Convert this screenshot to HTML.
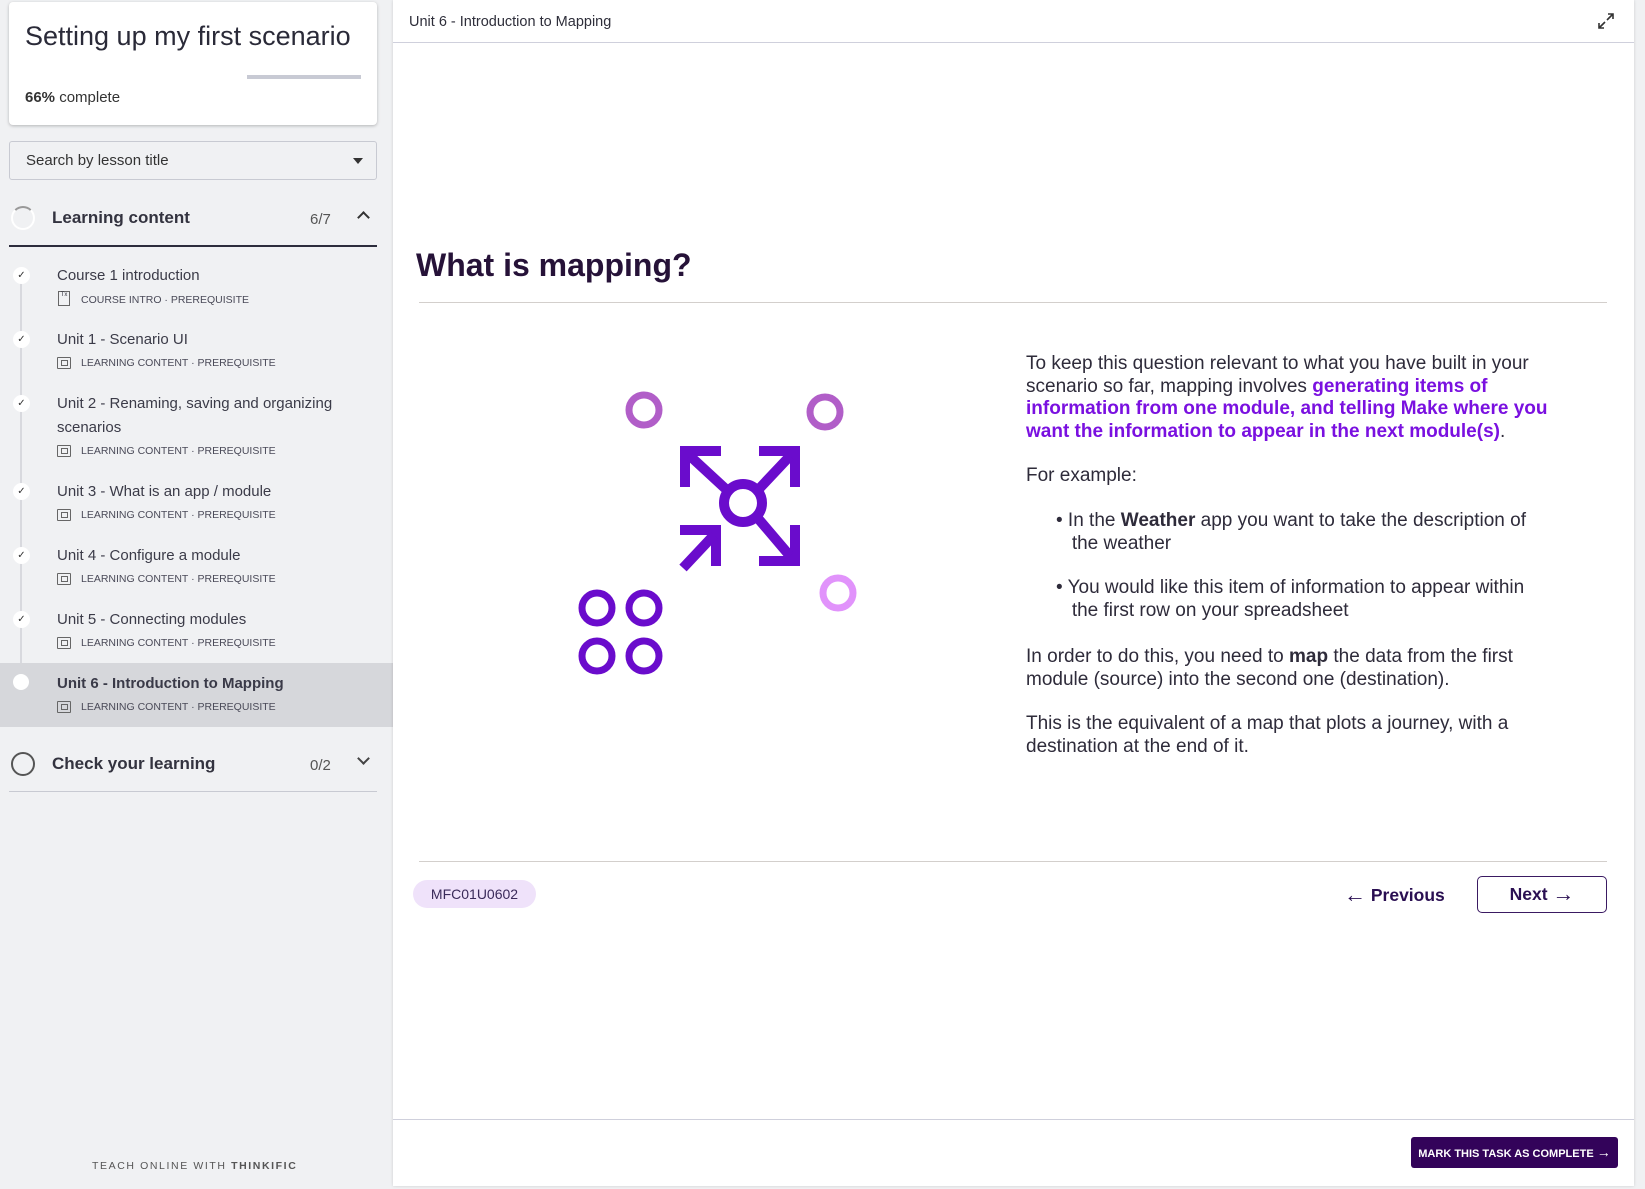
<!DOCTYPE html>
<html><head><meta charset="utf-8"><style>
*{margin:0;padding:0;box-sizing:border-box}
body{width:1645px;height:1189px;position:relative;overflow:hidden;background:#f0f1f3;font-family:"Liberation Sans",sans-serif;color:#2e2e3a}
.a{position:absolute;white-space:nowrap}
.t{font-size:15px;color:#3b3b48;margin-top:1px}
.m{font-size:10.5px;color:#4a4a58;margin-top:1px}
.ic{position:absolute;width:14px;height:12px;border:1.3px solid #666;border-radius:1px}
.ic:after{content:"";position:absolute;right:2px;bottom:2px;width:5px;height:4px;border:1px solid #666}
.ck{position:absolute;left:13px;width:17px;height:17px;border-radius:50%;background:#fff;font-size:10px;text-align:center;line-height:17px;color:#333}
.p{font-size:19px;color:#2e2b3a;line-height:22.7px;margin-top:2px}
.pu{color:#7a10e0;font-weight:bold}
.ar{font-size:22px;vertical-align:-1px}
</style></head><body>
<!-- sidebar -->
<div class="a" style="left:9px;top:2px;width:368px;height:123px;background:#fff;border-radius:4px;box-shadow:0 1px 3px rgba(0,0,0,.25)"></div>
<div class="a" style="left:25px;top:21px;font-size:27px;color:#2a2a38">Setting up my first scenario</div>
<div class="a" style="left:247px;top:75px;width:114px;height:4px;background:#c8cad4"></div>
<div class="a" style="left:25px;top:89px;font-size:15px;color:#333"><b style="font-weight:600">66%</b> complete</div>
<div class="a" style="left:9px;top:141px;width:368px;height:39px;border:1px solid #c8cad2;border-radius:3px;background:#f0f1f3"></div>
<div class="a" style="left:26px;top:152px;font-size:15px;color:#333">Search by lesson title</div>
<div class="a" style="left:353px;top:158px;border-left:5px solid transparent;border-right:5px solid transparent;border-top:6px solid #333"></div>
<div class="a" style="left:11px;top:206px;width:24px;height:24px;border-radius:50%;border:2px solid #fff;border-top-color:#999"></div>
<div class="a" style="left:52px;top:208px;font-size:17px;font-weight:bold;color:#33333f">Learning content</div>
<div class="a" style="left:310px;top:211px;font-size:15px;color:#555">6/7</div>
<div class="a" style="left:359px;top:213px;width:9px;height:9px;border-left:2px solid #333;border-top:2px solid #333;transform:rotate(45deg)"></div>
<div class="a" style="left:9px;top:245px;width:368px;height:2px;background:#2c2c3c"></div>
<div class="a" style="left:20px;top:280px;width:2px;height:400px;background:#d8d9de"></div>

<div class="ck" style="top:267px">✓</div>
<div class="a t" style="left:57px;top:266px">Course 1 introduction</div>
<div class="a" style="left:58px;top:291px;width:12px;height:15px;border:1.3px solid #666;font-size:6px;text-align:center">Tx</div>
<div class="a m" style="left:81px;top:293px">COURSE INTRO · PREREQUISITE</div>

<div class="ck" style="top:331px">✓</div>
<div class="a t" style="left:57px;top:330px">Unit 1 - Scenario UI</div>
<div class="ic" style="left:57px;top:357px"></div>
<div class="a m" style="left:81px;top:356px">LEARNING CONTENT · PREREQUISITE</div>

<div class="ck" style="top:395px">✓</div>
<div class="a t" style="left:57px;top:394px">Unit 2 - Renaming, saving and organizing</div>
<div class="a t" style="left:57px;top:418px">scenarios</div>
<div class="ic" style="left:57px;top:445px"></div>
<div class="a m" style="left:81px;top:444px">LEARNING CONTENT · PREREQUISITE</div>

<div class="ck" style="top:483px">✓</div>
<div class="a t" style="left:57px;top:482px">Unit 3 - What is an app / module</div>
<div class="ic" style="left:57px;top:509px"></div>
<div class="a m" style="left:81px;top:508px">LEARNING CONTENT · PREREQUISITE</div>

<div class="ck" style="top:547px">✓</div>
<div class="a t" style="left:57px;top:546px">Unit 4 - Configure a module</div>
<div class="ic" style="left:57px;top:573px"></div>
<div class="a m" style="left:81px;top:572px">LEARNING CONTENT · PREREQUISITE</div>

<div class="ck" style="top:611px">✓</div>
<div class="a t" style="left:57px;top:610px">Unit 5 - Connecting modules</div>
<div class="ic" style="left:57px;top:637px"></div>
<div class="a m" style="left:81px;top:636px">LEARNING CONTENT · PREREQUISITE</div>

<div class="a" style="left:0;top:663px;width:393px;height:64px;background:#d6d7db"></div>
<div class="ck" style="top:674px;width:16px;height:16px"></div>
<div class="a t" style="left:57px;top:674px;font-weight:600;color:#3a3a48">Unit 6 - Introduction to Mapping</div>
<div class="ic" style="left:57px;top:701px"></div>
<div class="a m" style="left:81px;top:700px">LEARNING CONTENT · PREREQUISITE</div>

<div class="a" style="left:11px;top:752px;width:24px;height:24px;border-radius:50%;border:2px solid #555"></div>
<div class="a" style="left:52px;top:754px;font-size:17px;font-weight:bold;color:#33333f">Check your learning</div>
<div class="a" style="left:310px;top:757px;font-size:15px;color:#555">0/2</div>
<div class="a" style="left:359px;top:754px;width:9px;height:9px;border-right:2px solid #444;border-bottom:2px solid #444;transform:rotate(45deg)"></div>
<div class="a" style="left:9px;top:791px;width:368px;height:1px;background:#c8cad2"></div>
<div class="a" style="left:92px;top:1160px;font-size:10.5px;letter-spacing:1.6px;color:#555">TEACH ONLINE WITH <b>THINKIFIC</b></div>

<!-- main -->
<div class="a" style="left:393px;top:0;width:1241px;height:1186px;background:#fff;box-shadow:0 0 3px rgba(0,0,0,.15)"></div>
<div class="a" style="left:393px;top:42px;width:1241px;height:1px;background:#cfd0dc"></div>
<div class="a" style="left:409px;top:14px;font-size:14.5px;color:#2e2e3a">Unit 6 - Introduction to Mapping</div>
<svg class="a" style="left:1597px;top:12px" width="18" height="18" viewBox="0 0 18 18" fill="none" stroke="#333" stroke-width="1.6"><path d="M10 8L16 2M11 2h5v5M8 10L2 16M2 11v5h5"/></svg>
<div class="a" style="left:416px;top:247px;font-size:32px;font-weight:bold;color:#261238">What is mapping?</div>
<div class="a" style="left:419px;top:302px;width:1188px;height:1px;background:#d3cfcc"></div>

<div class="a p" style="left:1026px;top:351px">To keep this question relevant to what you have built in your<br>scenario so far, mapping involves <span class="pu">generating items of</span><br><span class="pu">information from one module, and telling Make where you</span><br><span class="pu">want the information to appear in the next module(s)</span>.</div>
<div class="a p" style="left:1026px;top:463px">For example:</div>
<div class="a p" style="left:1056px;top:508px">• In the <b>Weather</b> app you want to take the description of<br>&nbsp;&nbsp;&nbsp;the weather</div>
<div class="a p" style="left:1056px;top:575px">• You would like this item of information to appear within<br>&nbsp;&nbsp;&nbsp;the first row on your spreadsheet</div>
<div class="a p" style="left:1026px;top:644px">In order to do this, you need to <b>map</b> the data from the first<br>module (source) into the second one (destination).</div>
<div class="a p" style="left:1026px;top:711px">This is the equivalent of a map that plots a journey, with a<br>destination at the end of it.</div>

<svg class="a" style="left:0;top:0" width="1645" height="1189" fill="none">
<circle cx="644" cy="410" r="15" stroke="#b15ec8" stroke-width="7"/>
<circle cx="825" cy="412" r="15" stroke="#b15ec8" stroke-width="7"/>
<circle cx="838" cy="593" r="15" stroke="#e193fb" stroke-width="7"/>
<g stroke="#6a0ccc" stroke-width="7">
<circle cx="597" cy="608" r="15"/><circle cx="644" cy="608" r="15"/>
<circle cx="597" cy="656" r="15"/><circle cx="644" cy="656" r="15"/>
</g>
<g stroke="#6a0ccc" stroke-width="10">
<circle cx="743" cy="503" r="19"/>
<path d="M685 487V451h36M759 451h36v36M795 525v36h-36M680 530h36v36"/>
<path d="M690 456L729 492M790 456L757 491M756 516L790 556M683 568L714 535"/>
</g>
</svg>

<div class="a" style="left:419px;top:861px;width:1188px;height:1px;background:#d3cfcc"></div>
<div class="a" style="left:413px;top:880px;width:123px;height:28px;border-radius:14px;background:#efe2fa;font-size:14px;color:#3a2a5a;text-align:center;line-height:28px">MFC01U0602</div>
<div class="a" style="left:1344px;top:882px;font-size:17.5px;font-weight:bold;color:#2a0f52"><span class="ar">←</span> Previous</div>
<div class="a" style="left:1477px;top:876px;width:130px;height:37px;border:1.5px solid #3a1a62;border-radius:5px;font-size:17.5px;font-weight:bold;color:#2a0f52;text-align:center;line-height:34px">Next <span class="ar">→</span></div>
<div class="a" style="left:393px;top:1119px;width:1241px;height:1px;background:#cfd0dc"></div>
<div class="a" style="left:1411px;top:1137px;width:207px;height:31px;border-radius:3px;background:#33035a;color:#fff;font-size:11px;font-weight:bold;text-align:center;line-height:31px">MARK THIS TASK AS COMPLETE <span style="font-size:14px">→</span></div>
</body></html>
